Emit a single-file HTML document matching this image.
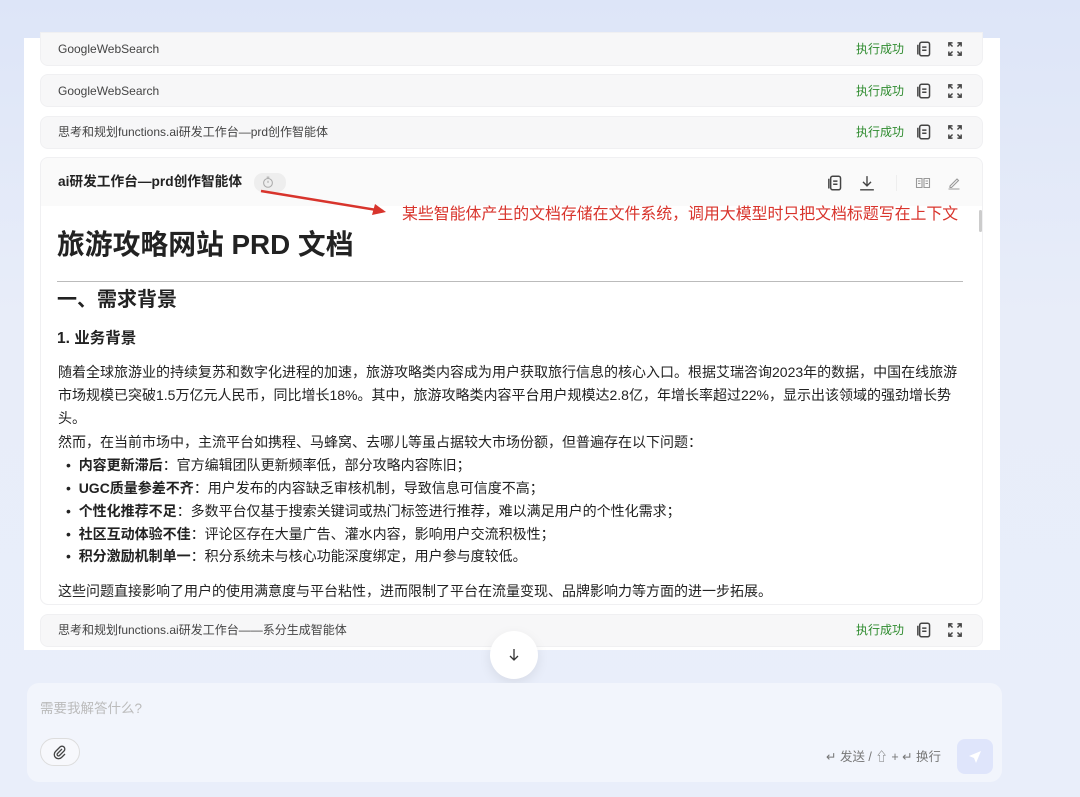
<!DOCTYPE html>
<html><head><meta charset="utf-8"><style>
*{margin:0;padding:0;box-sizing:border-box}
body{width:1080px;height:797px;overflow:hidden;background:linear-gradient(180deg,#dde5f8 0%,#e8edf9 40%,#e9eefa 100%);font-family:"Liberation Sans","Noto Sans CJK SC",sans-serif;color:#222;position:relative}
.a{position:absolute;white-space:nowrap;line-height:1.2}
.panel{position:absolute;left:24px;top:38px;width:976px;height:612px;background:#fff}
.card{position:absolute;left:40px;width:943px;background:#f7f7f8;border-radius:8px;border:1px solid #f0f0f2}
.card .t{position:absolute;left:17px;font-size:12px;color:#444;line-height:16px;white-space:nowrap}
.ok{position:absolute;left:815px;font-size:12px;color:#2e8b2e;line-height:16px}
.ic{position:absolute;width:16px;height:16px}
p.l{position:absolute;left:58px;font-size:14px;line-height:20px;white-space:nowrap;color:#222}
b{font-weight:bold}
</style></head><body>
<div class="panel"></div>

<div class="card" style="top:32px;height:34px;border-radius:0 0 8px 8px"><span class="t" style="top:8px">GoogleWebSearch</span><span class="ok" style="top:8px">执行成功</span>
<svg class="ic" style="left:875px;top:8px" viewBox="1.5 1.5 13 13" fill="none" stroke="#444" stroke-width="1.2"><rect x="4.5" y="2.5" width="8" height="11" rx="1.5"/><path d="M3 4.5v8M6.5 6.5h3.5M6.5 9h3.5"/></svg>
<svg class="ic" style="left:906px;top:8px" viewBox="1.5 1.5 13 13" fill="none" stroke="#444" stroke-width="1.2"><path d="M3 6V3h3M3 3l3 3M13 6V3h-3M13 3l-3 3M3 10v3h3M3 13l3-3M13 10v3h-3M13 13l-3-3"/></svg></div>

<div class="card" style="top:74px;height:33px"><span class="t" style="top:8px">GoogleWebSearch</span><span class="ok" style="top:8px">执行成功</span>
<svg class="ic" style="left:875px;top:8px" viewBox="1.5 1.5 13 13" fill="none" stroke="#444" stroke-width="1.2"><rect x="4.5" y="2.5" width="8" height="11" rx="1.5"/><path d="M3 4.5v8M6.5 6.5h3.5M6.5 9h3.5"/></svg>
<svg class="ic" style="left:906px;top:8px" viewBox="1.5 1.5 13 13" fill="none" stroke="#444" stroke-width="1.2"><path d="M3 6V3h3M3 3l3 3M13 6V3h-3M13 3l-3 3M3 10v3h3M3 13l3-3M13 10v3h-3M13 13l-3-3"/></svg></div>

<div class="card" style="top:116px;height:33px"><span class="t" style="top:7px">思考和规划functions.ai研发工作台—prd创作智能体</span><span class="ok" style="top:7px">执行成功</span>
<svg class="ic" style="left:875px;top:7px" viewBox="1.5 1.5 13 13" fill="none" stroke="#444" stroke-width="1.2"><rect x="4.5" y="2.5" width="8" height="11" rx="1.5"/><path d="M3 4.5v8M6.5 6.5h3.5M6.5 9h3.5"/></svg>
<svg class="ic" style="left:906px;top:7px" viewBox="1.5 1.5 13 13" fill="none" stroke="#444" stroke-width="1.2"><path d="M3 6V3h3M3 3l3 3M13 6V3h-3M13 3l-3 3M3 10v3h3M3 13l3-3M13 10v3h-3M13 13l-3-3"/></svg></div>

<div class="card" style="top:157px;height:448px;background:#fafafa">
<div style="position:absolute;left:0;top:48px;width:941px;height:398px;background:#fff;border-radius:0 0 8px 8px"></div>
<span class="a" style="left:17px;top:16px;font-size:13.7px;font-weight:bold;color:#222">ai研发工作台—prd创作智能体</span>
<div class="a" style="left:213px;top:15px;width:32px;height:19px;border-radius:9px;background:#eee"></div>
<svg class="ic" style="left:220px;top:17px;width:14px;height:14px" viewBox="0 0 16 16" fill="none" stroke="#aaa" stroke-width="1.2"><circle cx="8" cy="9" r="5"/><path d="M8 9V6.5M6.5 2.5h3"/></svg>
<svg class="ic" style="left:786px;top:17px" viewBox="1.5 1.5 13 13" fill="none" stroke="#444" stroke-width="1.2"><rect x="4.5" y="2.5" width="8" height="11" rx="1.5"/><path d="M3 4.5v8M6.5 6.5h3.5M6.5 9h3.5"/></svg>
<svg class="ic" style="left:818px;top:17px" viewBox="1 1 14 14" fill="none" stroke="#444" stroke-width="1.2"><path d="M8 2v8.5M4.5 7l3.5 3.5 3.5-3.5M2 14h12"/></svg>
<div class="a" style="left:855px;top:17px;width:1px;height:16px;background:#eee"></div>
<svg class="ic" style="left:874px;top:17px" viewBox="0 0 16 16" fill="none" stroke="#999" stroke-width="1.1"><path d="M1.5 3.5h5.5v9H1.5zM9 3.5h5.5v9H9zM3 6h2.5M3 8.5h2.5M10.5 6h2.5M10.5 8.5h2.5"/></svg>
<svg class="ic" style="left:905px;top:17px" viewBox="0 0 16 16" fill="none" stroke="#999" stroke-width="1.1"><path d="M4 11l7-7 1.5 1.5-7 7H4zM2.5 14h11"/></svg>
<div class="a" style="left:938px;top:52px;width:3px;height:22px;background:#ccc;border-radius:2px"></div>
</div>

<svg class="a" style="left:255px;top:186px" width="140" height="30"><path d="M6 5 L128 25" stroke="#d8342c" stroke-width="2.5"/><path d="M131 26 L117 29 L120 18 Z" fill="#d8342c"/></svg>
<span class="a" style="left:402px;top:205px;font-size:15.9px;color:#d8342c">某些智能体产生的文档存储在文件系统，调用大模型时只把文档标题写在上下文</span>

<span class="a" style="left:57px;top:228px;font-size:27.8px;font-weight:bold;color:#222">旅游攻略网站 PRD 文档</span>
<div class="a" style="left:57px;top:281px;width:906px;height:1px;background:#bbb"></div>
<span class="a" style="left:57px;top:288px;font-size:20px;font-weight:bold;color:#222">一、需求背景</span>
<span class="a" style="left:57px;top:330px;font-size:15.5px;font-weight:bold;color:#222">1. 业务背景</span>
<p class="l" style="top:362px">随着全球旅游业的持续复苏和数字化进程的加速，旅游攻略类内容成为用户获取旅行信息的核心入口。根据艾瑞咨询2023年的数据，中国在线旅游</p>
<p class="l" style="top:385px">市场规模已突破1.5万亿元人民币，同比增长18%。其中，旅游攻略类内容平台用户规模达2.8亿，年增长率超过22%，显示出该领域的强劲增长势</p>
<p class="l" style="top:408px">头。</p>
<p class="l" style="top:432px">然而，在当前市场中，主流平台如携程、马蜂窝、去哪儿等虽占据较大市场份额，但普遍存在以下问题：</p>
<p class="l" style="top:455px;left:66px">•&nbsp;&nbsp;<b>内容更新滞后</b>：官方编辑团队更新频率低，部分攻略内容陈旧；</p>
<p class="l" style="top:478px;left:66px">•&nbsp;&nbsp;<b>UGC质量参差不齐</b>：用户发布的内容缺乏审核机制，导致信息可信度不高；</p>
<p class="l" style="top:501px;left:66px">•&nbsp;&nbsp;<b>个性化推荐不足</b>：多数平台仅基于搜索关键词或热门标签进行推荐，难以满足用户的个性化需求；</p>
<p class="l" style="top:524px;left:66px">•&nbsp;&nbsp;<b>社区互动体验不佳</b>：评论区存在大量广告、灌水内容，影响用户交流积极性；</p>
<p class="l" style="top:546px;left:66px">•&nbsp;&nbsp;<b>积分激励机制单一</b>：积分系统未与核心功能深度绑定，用户参与度较低。</p>
<p class="l" style="top:581px">这些问题直接影响了用户的使用满意度与平台粘性，进而限制了平台在流量变现、品牌影响力等方面的进一步拓展。</p>

<div class="card" style="top:614px;height:33px"><span class="t" style="top:7px">思考和规划functions.ai研发工作台——系分生成智能体</span><span class="ok" style="top:7px">执行成功</span>
<svg class="ic" style="left:875px;top:7px" viewBox="1.5 1.5 13 13" fill="none" stroke="#444" stroke-width="1.2"><rect x="4.5" y="2.5" width="8" height="11" rx="1.5"/><path d="M3 4.5v8M6.5 6.5h3.5M6.5 9h3.5"/></svg>
<svg class="ic" style="left:906px;top:7px" viewBox="1.5 1.5 13 13" fill="none" stroke="#444" stroke-width="1.2"><path d="M3 6V3h3M3 3l3 3M13 6V3h-3M13 3l-3 3M3 10v3h3M3 13l3-3M13 10v3h-3M13 13l-3-3"/></svg></div>

<div class="a" style="left:490px;top:631px;width:48px;height:48px;border-radius:50%;background:#fff;box-shadow:0 4px 12px rgba(0,0,0,.08)"></div>
<svg class="a" style="left:506px;top:647px" width="16" height="16" viewBox="0 0 16 16" fill="none" stroke="#333" stroke-width="1.3"><path d="M8 2v11M4 9l4 4 4-4"/></svg>

<div class="a" style="left:27px;top:683px;width:975px;height:99px;border-radius:12px;background:#f2f5fc"></div>
<span class="a" style="left:40px;top:701px;font-size:13.5px;color:#bbb">需要我解答什么?</span>
<div class="a" style="left:40px;top:738px;width:40px;height:28px;border-radius:14px;border:1px solid #ddd;background:#f7f8fc"></div>
<svg class="a" style="left:52px;top:744px" width="16" height="16" viewBox="0 0 16 16" fill="none" stroke="#444" stroke-width="1.3"><path d="M10 5l-4.5 4.5a1.4 1.4 0 0 0 2 2L12 7a2.8 2.8 0 0 0-4-4L3.5 7.5a4.2 4.2 0 0 0 6 6L13 10"/></svg>
<span class="a" style="left:826px;top:750px;font-size:12.5px;color:#777">↵ 发送 / ⇧ + ↵ 换行</span>
<div class="a" style="left:957px;top:739px;width:36px;height:35px;border-radius:8px;background:#dfe5fb"></div>
<svg class="a" style="left:966px;top:748px" width="18" height="18" viewBox="0 0 18 18"><path d="M15 3L3 8l5 2 2 5z" fill="#fff"/></svg>
</body></html>
